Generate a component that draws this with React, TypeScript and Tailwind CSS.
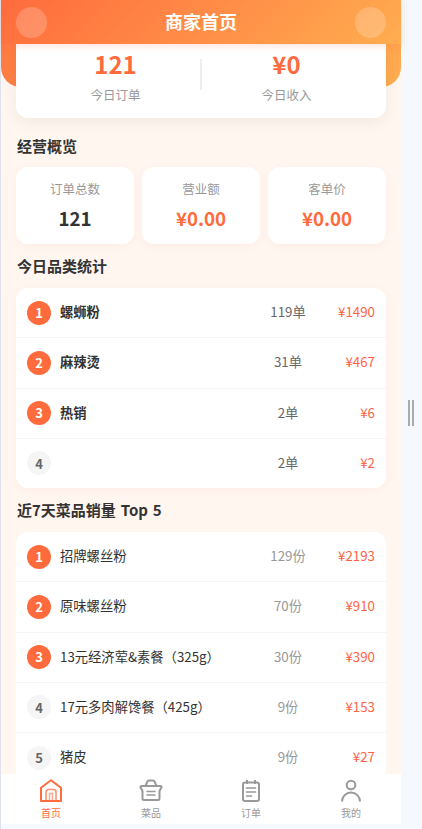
import React from "react";

const FONT = '"Noto Sans CJK SC", "Noto Sans", sans-serif';

function Badge({ n }: { n: number }) {
  const top = n <= 3;
  return (
    <div
      className={
        "flex h-6 w-6 shrink-0 items-center justify-center rounded-full text-[13px] font-bold " +
        (top ? "bg-[#ff6b3d] text-white" : "bg-[#f5f5f5] text-[#666666]")
      }
    >
      {n}
    </div>
  );
}

function Row({
  n,
  name,
  count,
  price,
  bold,
  last,
}: {
  n: number;
  name: string;
  count: string;
  price: string;
  bold?: boolean;
  last?: boolean;
}) {
  return (
    <div
      className={
        "flex items-center px-[11px] " +
        (last ? "h-[49.25px]" : "h-[50.25px] border-b border-[#f5f5f5]")
      }
    >
      <Badge n={n} />
      <div
        className={
          "ml-[9px] -mt-[1px] flex-1 truncate text-[13.3px] leading-[18px] text-[#333333] " +
          (bold ? "font-semibold" : "font-normal")
        }
      >
        {name}
      </div>
      <div
        className={
          "-mt-[1px] w-[60px] text-center text-[13.3px] leading-[18px] " +
          (bold ? "text-[#666666]" : "text-[#999999]")
        }
      >
        {count}
      </div>
      <div className="-mt-[1px] w-[57px] text-right text-[13.3px] leading-[18px] text-[#ff6347]">{price}</div>
    </div>
  );
}

function Stat({ label, value, accent }: { label: string; value: string; accent?: boolean }) {
  return (
    <div className="flex h-[77px] flex-1 flex-col items-center rounded-xl bg-white pt-[13px] shadow-[0_2px_8px_rgba(255,107,61,0.06)]">
      <div className="text-[12.5px] leading-[18px] text-[#999999]">{label}</div>
      <div
        className={
          "mt-[6px] text-[18.7px] leading-[27px] font-bold " +
          (accent ? "text-[#ff6b3d]" : "text-[#333333]")
        }
      >
        {value}
      </div>
    </div>
  );
}

function HomeIcon() {
  return (
    <svg width="24" height="24" viewBox="0 0 24 24" fill="none" stroke="#ff6b3d" strokeWidth="2">
      <path d="M2 8.800 12 1.300l10 7.500V22H2Z" strokeLinejoin="round" />
      <path d="M7 22V13a2.500 2.500 0 0 1 2.500-2.500h5A2.500 2.500 0 0 1 17 13v9" strokeWidth="1.600" opacity="0.75" />
      <path d="M10.500 22v-7.500h3V22" strokeWidth="1.400" opacity="0.6" />
    </svg>
  );
}

function BasketIcon() {
  return (
    <svg width="24" height="24" viewBox="0 0 24 24" fill="none" stroke="#999999" strokeWidth="2">
      <path d="M2.500 7h19a1 1 0 0 1 1 1.200L20.500 12v7.500a1.500 1.500 0 0 1-1.500 1.500H5a1.500 1.500 0 0 1-1.500-1.500V12L1.500 8.200A1 1 0 0 1 2.500 7Z" strokeLinejoin="round" />
      <path d="M6.500 7 8.500 2.500a1.500 1.500 0 0 1 1.400-1h4.200a1.500 1.500 0 0 1 1.400 1L17.500 7" />
      <path d="M8 12.500h8M8 16h8" strokeWidth="1.500" strokeLinecap="round" />
    </svg>
  );
}

function ClipboardIcon() {
  return (
    <svg width="24" height="24" viewBox="0 0 24 24" fill="none" stroke="#999999" strokeWidth="2">
      <rect x="4" y="3.500" width="16" height="18.500" rx="2" />
      <path d="M8 1v4M16 1v4" />
      <path d="M7.500 9h9M7.500 13h9M7.500 17h5" strokeWidth="1.700" strokeLinecap="round" />
    </svg>
  );
}

function UserIcon() {
  return (
    <svg width="24" height="24" viewBox="0 0 24 24" fill="none" stroke="#999999" strokeWidth="2">
      <circle cx="12" cy="6" r="4.300" />
      <path d="M3 22.500a9 9 0 0 1 18 0" />
    </svg>
  );
}

function Tab({ icon, label, active }: { icon: React.ReactNode; label: string; active?: boolean }) {
  return (
    <div className="flex flex-1 flex-col items-center pt-[5px]">
      {icon}
      <div className={"mt-[1.500px] text-[10px] leading-[15px] " + (active ? "text-[#ff6b3d]" : "text-[#999999]")}>
        {label}
      </div>
    </div>
  );
}

export default function App() {
  return (
    <div
      className="flex h-[829px] w-[422px] overflow-hidden bg-[#f5f8fc]"
      style={{ fontFamily: FONT }}
    >
      <div className="h-full w-px shrink-0 bg-[#dfe3ee]" />
      <div className="flex h-[824px] w-[400px] shrink-0 flex-col bg-[#fff6f0]">
        <header className="relative z-10 flex h-[44px] shrink-0 items-center justify-between bg-[linear-gradient(135deg,#ff6b3d,#ffad50)] px-[15px] shadow-[0_2px_8px_rgba(255,107,61,0.2)]">
          <div className="h-[31px] w-[31px] rounded-full bg-white/20" />
          <div className="-mt-[2px] text-[18px] font-bold text-white">商家首页</div>
          <div className="h-[31px] w-[31px] rounded-full bg-white/20" />
        </header>

        <main className="min-h-0 flex-1 overflow-hidden">
          <div className="h-[43px] rounded-b-[20px] bg-[linear-gradient(135deg,#ff7a42,#ffad50)]" />
          <div className="mx-[15px] -mt-[43px] flex h-[74px] items-start justify-center gap-[60px] rounded-b-xl bg-white pt-[2px] shadow-[0_4px_16px_rgba(0,0,0,0.06)]">
            <div className="flex w-[49px] flex-col items-center">
              <div className="text-[24px] leading-[36px] font-bold text-[#ff6b3d]">121</div>
              <div className="mt-[4px] whitespace-nowrap text-[12.5px] leading-[18px] text-[#999999]">今日订单</div>
            </div>
            <div className="mt-[13px] h-[31px] w-[2px] bg-[#eeeeee]" />
            <div className="flex w-[49px] flex-col items-center">
              <div className="text-[24px] leading-[36px] font-bold text-[#ff6b3d]">¥0</div>
              <div className="mt-[4px] whitespace-nowrap text-[12.5px] leading-[18px] text-[#999999]">今日收入</div>
            </div>
          </div>

          <div className="mx-[16px] mt-[16px] text-[15px] leading-[24px] font-semibold text-[#333333]">经营概览</div>
          <div className="mx-[15px] mt-[9px] flex gap-[8px]">
            <Stat label="订单总数" value="121" />
            <Stat label="营业额" value="¥0.00" accent />
            <Stat label="客单价" value="¥0.00" accent />
          </div>

          <div className="mx-[16px] mt-[10px] text-[15px] leading-[24px] font-semibold text-[#333333]">今日品类统计</div>
          <div className="mx-[15px] mt-[10px] overflow-hidden rounded-xl bg-white shadow-[0_2px_8px_rgba(255,107,61,0.06)]">
            <Row n={1} name="螺蛳粉" count="119单" price="¥1490" bold />
            <Row n={2} name="麻辣烫" count="31单" price="¥467" bold />
            <Row n={3} name="热销" count="2单" price="¥6" bold />
            <Row n={4} name="" count="2单" price="¥2" bold last />
          </div>

          <div className="mx-[16px] mt-[10px] text-[15px] leading-[24px] font-semibold text-[#333333] [word-spacing:1.500px]">近7天菜品销量 Top 5</div>
          <div className="mx-[15px] mt-[10px] rounded-xl bg-white">
            <Row n={1} name="招牌螺丝粉" count="129份" price="¥2193" />
            <Row n={2} name="原味螺丝粉" count="70份" price="¥910" />
            <Row n={3} name="13元经济荤&素餐（325g）" count="30份" price="¥390" />
            <Row n={4} name="17元多肉解馋餐（425g）" count="9份" price="¥153" />
            <Row n={5} name="猪皮" count="9份" price="¥27" last />
          </div>
        </main>

        <nav className="flex h-[50px] shrink-0 bg-white">
          <Tab icon={<HomeIcon />} label="首页" active />
          <Tab icon={<BasketIcon />} label="菜品" />
          <Tab icon={<ClipboardIcon />} label="订单" />
          <Tab icon={<UserIcon />} label="我的" />
        </nav>
      </div>
      <div className="ml-[7px] mt-[400px] flex h-[26px] gap-[2px]">
        <div className="h-full w-[2px] bg-[#aaaaaa]" />
        <div className="h-full w-[2px] bg-[#aaaaaa]" />
      </div>
    </div>
  );
}
